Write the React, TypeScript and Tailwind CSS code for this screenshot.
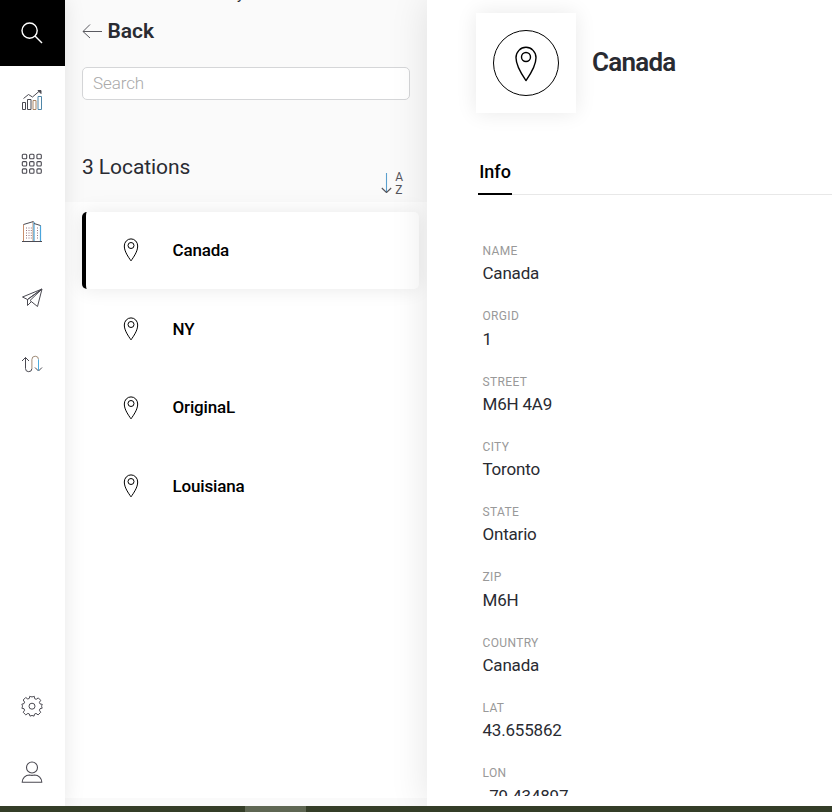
import React from "react";

type IconProps = { className?: string };

const Svg = ({
  box,
  width,
  children,
  className = "",
}: {
  box: string;
  width: number;
  children: React.ReactNode;
  className?: string;
}) => (
  <svg
    viewBox={box}
    fill="none"
    stroke="currentColor"
    strokeWidth={width}
    strokeLinejoin="round"
    className={`block shrink-0 ${className}`}
  >
    {children}
  </svg>
);

const SearchIcon = () => (
  <Svg box="0 0 22 22" width={1.4} className="size-[22px] text-white">
    <circle cx="8.6" cy="8.6" r="7.6" />
    <path d="M14 14l7 7" />
  </Svg>
);

const ChartIcon = () => (
  <Svg box="0 0 22 22" width={1} className="size-[22px]">
    <path d="M1.500 13.500h3v7h-3z" />
    <path d="M6.500 10.500h3.500v10h-3.500z" />
    <path d="M12 11.500h3v9h-3z" stroke="#a98565" />
    <path d="M17 7.500h3.500v13H17z" stroke="#4f86a8" />
    <path d="M2.500 9.500l5-4 4 2.500 7-6" />
    <path d="M17 1.500H20v3z" fill="currentColor" />
  </Svg>
);

const dots = [3.5, 10.8, 18.1];
const GridIcon = () => (
  <Svg box="0 0 22 22" width={1.1} className="size-[22px]">
    {dots.map((y) =>
      dots.map((x) => (
        <rect key={`${x}-${y}`} x={x - 2.2} y={y - 2.2} width="4.4" height="4.4" rx="1" />
      )),
    )}
  </Svg>
);

const BuildingIcon = () => (
  <Svg box="0 0 22 22" width={1} className="size-[22px]">
    <path d="M2.500 21V4.500M12 21V1.500" stroke="#c98f6c" />
    <path d="M13 2V21M19.500 21V5.500" stroke="#4aa5dc" strokeWidth={1.2} />
    <path d="M2.500 4.500L12.500 1.500M13 3.500l6.500 2M1 21.500h20" />
    <path d="M5.500 7.500v12M8 7.500v12M10.300 7.500v12M16.500 7.500v12" stroke="#98737c" strokeDasharray="1 1.5" />
  </Svg>
);

const PlaneIcon = () => (
  <Svg box="0 0 22 22" width={1} className="size-[22px]">
    <path d="M21 2L1.500 10l5 2.500zM6.500 12.500v6L10 15M9 13.500L21 2l-4.500 17.500zM6.500 12.500L21 2" />
  </Svg>
);

const RouteIcon = () => (
  <Svg box="0 0 22 22" width={1} className="size-[22px]">
    <path d="M4.500 4.500v11a3.200 3.200 0 0 0 6.400 0" />
    <path d="M1 8L4.500 4.500 8 8M14 14.500l3.500 3.500 3.500-3.500" />
    <path d="M10.900 15.500v-9a3.300 3.300 0 0 1 6.600 0" stroke="#a08c78" />
    <path d="M17.500 6.500V17.500" stroke="#4daddf" />
  </Svg>
);

const GearIcon = () => (
  <Svg box="0 0 22 22" width={1} className="size-[22px]">
    <circle cx="11" cy="11.200" r="3" />
    <path d="M8.800 1.200c1.200.9 3.200.9 4.400 0l.5 2.500 1.500.6 2.100-1.400 2.400 2.400-1.300 2.100.6 1.500 2.300.5c-.9 1.200-.9 2.500 0 3.700l-2.300.6-.6 1.500 1.300 2.100-2.600 2.600-2.100-1.500-1.500.7-.5 2.100c-1.200-.9-2.800-.9-4 0l-.6-2.200-1.500-.6-2.100 1.500-2.600-2.600 1.400-2.100-.6-1.500-2.200-.5c.9-1.200.9-2.800 0-4l2.200-.6.6-1.500-1.400-2.100 2.500-2.500L6.800 4l1.500-.6z" />
  </Svg>
);

const UserIcon = () => (
  <Svg box="0 0 22 22" width={1.1} className="size-[22px]">
    <ellipse cx="11" cy="6.500" rx="5.500" ry="5.500" />
    <path d="M1.200 21.300c0-4.300 3.200-7.300 7.300-7.300 1.600.5 3.400.5 5 0 4.100 0 7.300 3 7.300 7.300z" />
  </Svg>
);

const PinIcon = ({ className = "" }: IconProps) => (
  <Svg box="0 0 16 24" width={1} className={className}>
    <circle cx="8" cy="7.500" r="3" />
    <path d="M8 22.800C5.500 19.300 1.300 13.500 1.300 8a6.700 7.100 0 0 1 13.400 0c0 5.500-4.200 11.300-6.700 14.800z" />
  </Svg>
);

const NavItem = ({ children, className = "pt-px" }: { children: React.ReactNode; className?: string }) => (
  <a className={`flex h-[66px] items-center justify-center pr-px text-[#4b4a52] ${className}`}>{children}</a>
);

const locations = ["Canada", "NY", "OriginaL", "Louisiana"];

const details = [
  ["NAME", "Canada"],
  ["ORGID", "1"],
  ["STREET", "M6H 4A9"],
  ["CITY", "Toronto"],
  ["STATE", "Ontario"],
  ["ZIP", "M6H"],
  ["COUNTRY", "Canada"],
  ["LAT", "43.655862"],
  ["LON", "-79.434897"],
];

const Sidebar = () => (
  <nav className="relative z-20 flex w-[65px] shrink-0 flex-col bg-white shadow-[0_0_20px_rgba(0,0,0,0.10)]">
    <a className="flex h-[66px] items-center justify-center bg-black pr-px">
      <SearchIcon />
    </a>
    <NavItem><ChartIcon /></NavItem>
    <NavItem className="pb-0.5"><GridIcon /></NavItem>
    <NavItem className="pb-0"><BuildingIcon /></NavItem>
    <NavItem><PlaneIcon /></NavItem>
    <NavItem><RouteIcon /></NavItem>
    <div className="mt-auto">
      <NavItem className="pb-0.5"><GearIcon /></NavItem>
      <NavItem className="pb-0.5"><UserIcon /></NavItem>
    </div>
  </nav>
);

const LocationList = () => (
  <section className="flex w-[362px] shrink-0 flex-col bg-[#fafafa]">
    <header className="relative h-[202px] shrink-0 px-[17px]">
      <span className="absolute left-[172px] top-[-15px] text-[15px] leading-[18px] text-[#292b32]">y</span>
      <div className="flex h-[62px] items-center gap-[5.5px] text-[21px] font-semibold text-[#292b32]">
        <Svg box="0 0 20 16" width={1} className="h-4 w-5 text-[#5a5a60]">
          <path d="M20 8.500H1M8 1.500l-7 7 7 6.500" />
        </Svg>
        <span className="pt-0.5">Back</span>
      </div>
      <input
        placeholder="Search"
        className="mt-[5px] block h-[33px] w-[328px] rounded-[5px] border border-[#d5d6d8] bg-white px-2.5 pb-0.5 text-[17px] font-light tracking-[-0.1px] outline-none placeholder:text-[#aaa]"
      />
      <div className="flex items-start justify-between pt-[53px]">
        <h2 className="text-[21px] leading-7 tracking-[-0.08px] text-[#292b32]">3 Locations</h2>
        <div className="mr-[7px] mt-[18px] flex gap-[3px] text-[#55555c]">
          <Svg box="0 0 11 24" width={1.1} className="h-6 w-[11px]">
            <path d="M5.500 2v19.500" stroke="#5a9fce" />
            <path d="M.8 17l4.700 4.500 4.700-4.500" />
          </Svg>
          <div className="flex flex-col text-[12px] leading-[13px]">
            <span>A</span>
            <span>Z</span>
          </div>
        </div>
      </div>
    </header>
    <ul className="mb-2 flex grow flex-col gap-[1.75px] bg-white pl-[17px] pr-2 pt-2.5">
      {locations.map((name, i) => (
        <li
          key={name}
          className={
            "flex h-[77px] items-center rounded-[5px] border-l-4 pl-[37px] text-black " +
            (i === 0 ? "border-black bg-white shadow-[0_0_20px_rgba(0,0,0,0.09)]" : "border-transparent")
          }
        >
          <PinIcon className="-mt-px h-6 w-4" />
          <span className="ml-[33.5px] text-[17px] font-medium tracking-[-0.17px]">{name}</span>
        </li>
      ))}
    </ul>
  </section>
);

const Detail = () => (
  <main className="relative z-10 min-w-0 grow bg-white pl-[49px] shadow-[0_0_36px_rgba(0,0,0,0.11)]">
    <div className="flex items-center pt-[13px]">
      <div className="flex size-[100px] items-center justify-center bg-white shadow-[0_0_20px_rgba(0,0,0,0.09)]">
        <div className="flex size-[66px] items-center justify-center rounded-full border border-black">
          <Svg box="0 0 24 36" width={1.4} className="mt-0.5 h-9 w-6 text-black">
            <circle cx="12" cy="11" r="4.5" />
            <path d="M12 34.500C8.500 29.500 2 20.500 2 11.800a10 10.500 0 0 1 20 0c0 8.700-6.500 17.700-10 22.700z" />
          </Svg>
        </div>
      </div>
      <h1 className="ml-4 pb-0.5 text-[26px] font-semibold leading-8 tracking-[-0.75px] text-[#292b32]">Canada</h1>
    </div>
    <div className="ml-0.5 mt-[45px] flex h-[37px] border-b border-[#e8e8e8]">
      <button className="h-[37px] w-[34px] border-b-2 border-black pb-2 text-[18px] font-medium leading-[27px] text-black">
        Info
      </button>
    </div>
    <dl className="mt-[47px] h-[554px] overflow-hidden pl-[6.5px]">
      {details.map(([label, value]) => (
        <div key={label} className="h-[65.3px] pt-0.5">
          <dt className="text-[12px] leading-[14px] tracking-[0.35px] text-[#999]">{label}</dt>
          <dd className="mt-[4.3px] text-[17px] leading-[22px] tracking-[-0.2px] text-[#292b32]">
            {value.startsWith("-") ? (
              <>
                <span className="tracking-[2px]">-</span>
                {value.slice(1)}
              </>
            ) : (
              value
            )}
          </dd>
        </div>
      ))}
    </dl>
  </main>
);

export default function App() {
  return (
    <div className="h-[812px] w-[832px] overflow-hidden bg-white font-['Roboto',sans-serif]">
      <div className="flex h-[806px] overflow-hidden">
        <Sidebar />
        <LocationList />
        <Detail />
      </div>
      <footer className="h-1.5 bg-[#343d27] pl-[245px]">
        <div className="h-full w-[61px] bg-[#5e6652]" />
      </footer>
    </div>
  );
}
